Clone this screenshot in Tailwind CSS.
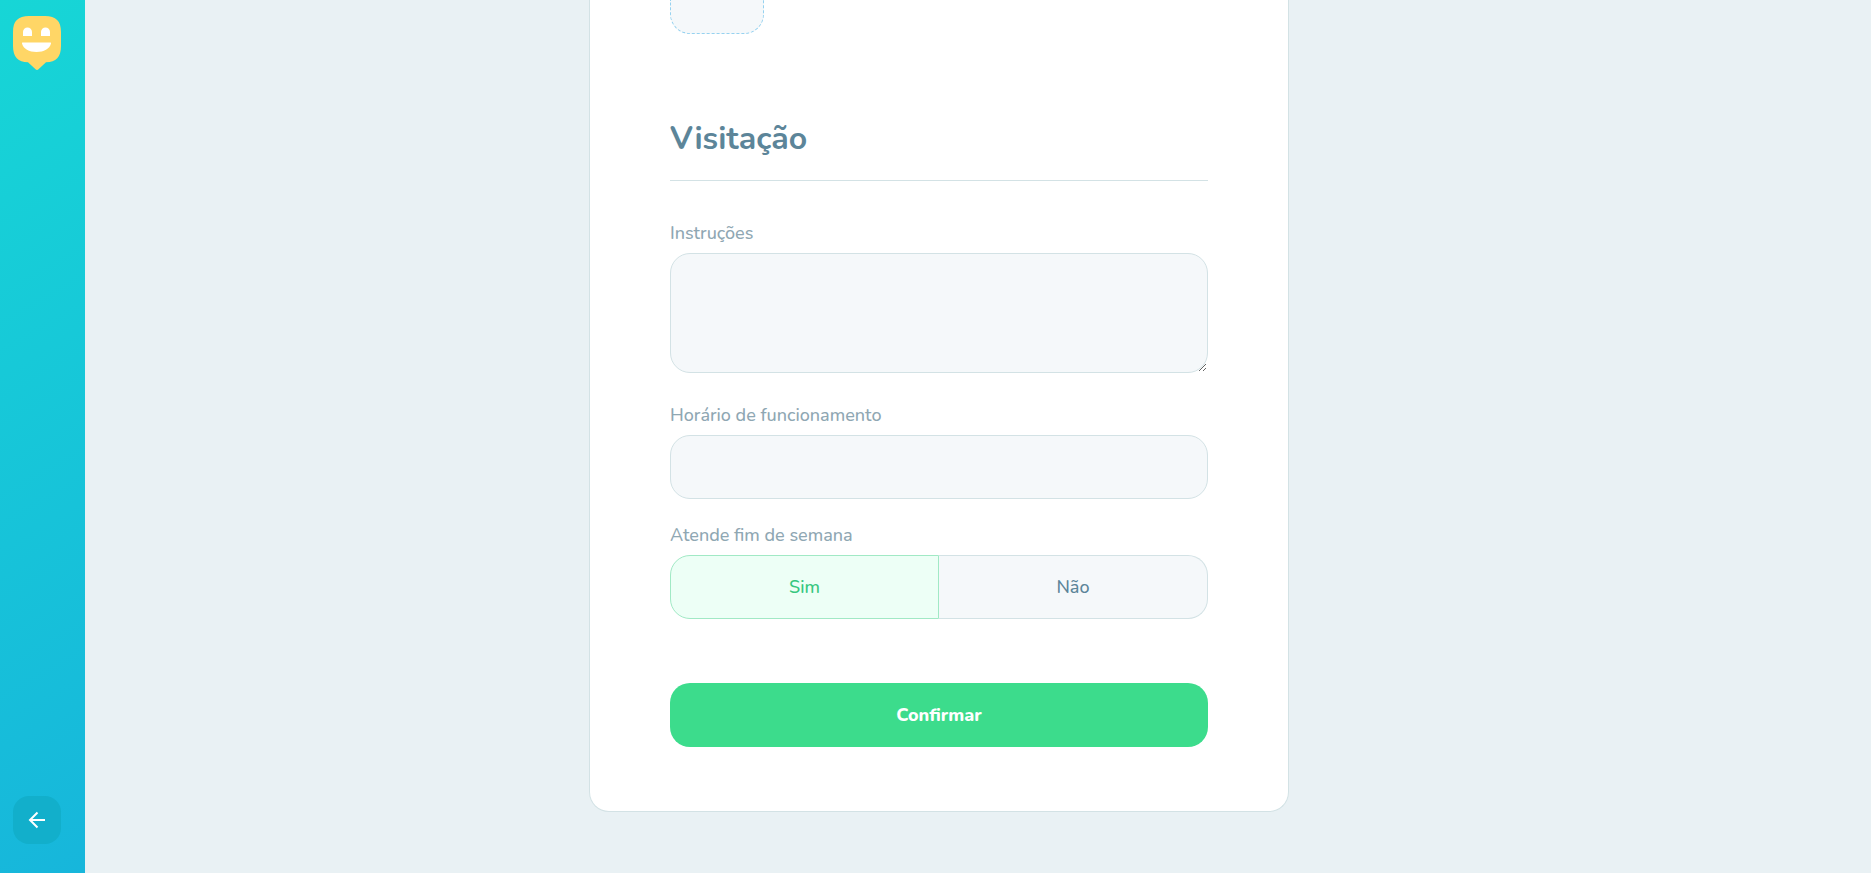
<!DOCTYPE html>
<html lang="pt-BR">
<head>
<meta charset="utf-8">
<meta name="viewport" content="width=device-width, initial-scale=1">
<title>Visitação</title>
<script src="https://cdn.jsdelivr.net/npm/@tailwindcss/browser@4"></script>
</head>
<body class="flex min-h-screen bg-[#e9f1f4] font-['Nunito','Lato',sans-serif] text-lg leading-6 text-[#8fa7b3]">
  <aside class="flex w-[85px] shrink-0 flex-col items-start justify-between bg-linear-[150deg,#17d6d6,#17b6db] px-[13px] pt-4 pb-[29px]">
    <a href="#" aria-label="Início">
      <svg class="block h-[54px] w-12" viewBox="0 0 48 54" aria-hidden="true">
        <path fill="#ffd666" d="M16 0h16c11 0 16 5 16 16v14c0 11-5 16-15 16.300L25.500 53.300q-1.500 1.400-3 0L15 46.300C5 46 0 41 0 30V16C0 5 5 0 16 0Z"/>
        <path fill="#fff" d="M10 20v-4a4.500 4.500 0 0 1 9 0v4ZM28 20v-4a4.500 4.500 0 0 1 9 0v4ZM9.500 26.500h28q.7 0 .5 1C36.500 33 31 36 23.500 36S10.500 33 9 27.500q-.2-1 .5-1Z"/>
      </svg>
    </a>
    <button type="button" aria-label="Voltar" class="flex size-12 items-center justify-center rounded-2xl bg-[#12afcb]">
      <svg class="size-6" viewBox="0 0 24 24" fill="none" stroke="#fff" stroke-width="2" aria-hidden="true"><path d="M20 12H5M12.500 4.500 5 12l7.500 7.500"/></svg>
    </button>
  </aside>
  <main class="flex flex-1 items-start justify-center pr-[78px] pb-[61px]">
    <form class="w-full max-w-[700px] rounded-b-[20px] border border-t-0 border-[#d3e2e5] bg-white px-20 pb-16">
      <button type="button" aria-label="Adicionar foto" class="block h-[34px] w-[94px] rounded-b-[20px] border border-t-0 border-dashed border-[#96d2f0] bg-[#f5f8fa]"></button>
      <fieldset class="mt-[84px]">
        <legend class="w-full border-b border-[#d3e2e5] pb-5 text-[32px] leading-[42px] font-bold text-[#5c8599]">Visitação</legend>
        <div class="mt-10 flex flex-col gap-2">
          <label for="instructions" class="font-medium">Instruções</label>
          <textarea id="instructions" class="h-[120px] w-full resize-y rounded-[20px] border border-[#d3e2e5] bg-[#f5f8fa] px-6 py-4 text-[#5c8599]"></textarea>
        </div>
        <div class="mt-[30px] flex flex-col gap-2">
          <label for="hours" class="font-medium">Horário de funcionamento</label>
          <input id="hours" type="text" class="h-16 w-full rounded-[20px] border border-[#d3e2e5] bg-[#f5f8fa] px-6 text-[#5c8599]">
        </div>
        <div class="mt-6 flex flex-col gap-2" role="radiogroup" aria-labelledby="weekend">
          <span id="weekend" class="font-medium">Atende fim de semana</span>
          <div class="grid h-16 grid-cols-2 font-medium text-[#5c8599]">
            <label class="relative flex items-center justify-center rounded-l-[20px] border border-[#d3e2e5] bg-[#f5f8fa] has-checked:border-[#a1e9c5] has-checked:bg-[#edfff6] has-checked:text-[#37c77f]"><input type="radio" name="weekend" value="yes" checked class="sr-only">Sim</label>
            <label class="relative flex items-center justify-center rounded-r-[20px] border border-l-0 border-[#d3e2e5] bg-[#f5f8fa] has-checked:border-[#a1e9c5] has-checked:bg-[#edfff6] has-checked:text-[#37c77f]"><input type="radio" name="weekend" value="no" class="sr-only">Não</label>
          </div>
        </div>
      </fieldset>
      <button type="submit" class="mt-16 h-16 w-full rounded-[20px] bg-[#3cdc8c] font-extrabold text-white">Confirmar</button>
    </form>
  </main>
</body>
</html>
